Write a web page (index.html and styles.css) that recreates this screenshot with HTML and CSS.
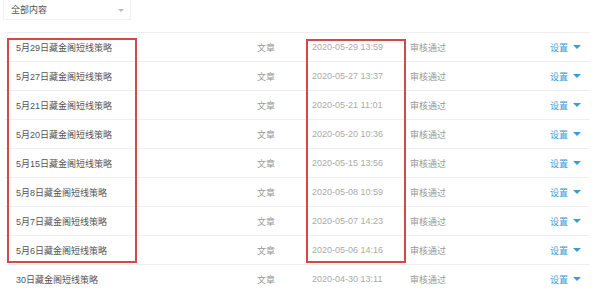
FILE: index.html
```html
<!DOCTYPE html>
<html lang="zh-CN">
<head>
<meta charset="utf-8">
<title>内容列表</title>
<link rel="stylesheet" href="styles.css">
</head>
<body>
<div class="page">
  <div class="filter">
    <span class="filter-label">全部内容</span>
    <span class="filter-caret"></span>
  </div>
  <div class="list">
    <div class="row"><span class="c-title">5月29日藏金阁短线策略</span><span class="c-type">文章</span><span class="c-date">2020-05-29 13:59</span><span class="c-status">审核通过</span><span class="c-act">设置<i class="caret"></i></span></div>
    <div class="row"><span class="c-title">5月27日藏金阁短线策略</span><span class="c-type">文章</span><span class="c-date">2020-05-27 13:37</span><span class="c-status">审核通过</span><span class="c-act">设置<i class="caret"></i></span></div>
    <div class="row"><span class="c-title">5月21日藏金阁短线策略</span><span class="c-type">文章</span><span class="c-date">2020-05-21 11:01</span><span class="c-status">审核通过</span><span class="c-act">设置<i class="caret"></i></span></div>
    <div class="row"><span class="c-title">5月20日藏金阁短线策略</span><span class="c-type">文章</span><span class="c-date">2020-05-20 10:36</span><span class="c-status">审核通过</span><span class="c-act">设置<i class="caret"></i></span></div>
    <div class="row"><span class="c-title">5月15日藏金阁短线策略</span><span class="c-type">文章</span><span class="c-date">2020-05-15 13:56</span><span class="c-status">审核通过</span><span class="c-act">设置<i class="caret"></i></span></div>
    <div class="row"><span class="c-title">5月8日藏金阁短线策略</span><span class="c-type">文章</span><span class="c-date">2020-05-08 10:59</span><span class="c-status">审核通过</span><span class="c-act">设置<i class="caret"></i></span></div>
    <div class="row"><span class="c-title">5月7日藏金阁短线策略</span><span class="c-type">文章</span><span class="c-date">2020-05-07 14:23</span><span class="c-status">审核通过</span><span class="c-act">设置<i class="caret"></i></span></div>
    <div class="row"><span class="c-title">5月6日藏金阁短线策略</span><span class="c-type">文章</span><span class="c-date">2020-05-06 14:16</span><span class="c-status">审核通过</span><span class="c-act">设置<i class="caret"></i></span></div>
    <div class="row"><span class="c-title">30日藏金阁短线策略</span><span class="c-type">文章</span><span class="c-date">2020-04-30 13:11</span><span class="c-status">审核通过</span><span class="c-act">设置<i class="caret"></i></span></div>
  </div>
  <div class="mark mark-titles"></div>
  <div class="mark mark-dates"></div>
</div>
</body>
</html>
```
FILE: styles.css
```css
html, body {
  margin: 0;
  padding: 0;
  background: #fff;
}
body {
  font-family: "Liberation Sans", "Noto Sans CJK SC", sans-serif;
  font-size: 9px;
  color: #666;
  overflow: hidden;
}
.page {
  position: relative;
  width: 594px;
  height: 290px;
  overflow: hidden;
}
.filter {
  box-sizing: border-box;
  margin: -1px 0 0 3px;
  width: 128px;
  height: 21px;
  border: 1px solid #f0f0f0;
  display: flex;
  align-items: center;
  justify-content: space-between;
  padding: 0 6px 0 7px;
}
.filter-label {
  color: #555;
  font-size: 9px;
}
.filter-caret {
  width: 0;
  height: 0;
  border-left: 3px solid transparent;
  border-right: 3px solid transparent;
  border-top: 3px solid #bbb;
  margin-top: 1px;
}
.list {
  margin: 12px 4px 0 5px;
  border-top: 1px solid #eeeeee;
}
.row {
  box-sizing: border-box;
  height: 29px;
  border-bottom: 1px solid #eeeeee;
  display: grid;
  grid-template-columns: 241px 55px 98px 140px 1fr;
  align-items: center;
  padding-left: 11px;
  white-space: nowrap;
}
.c-title { color: #555; }
.c-type { color: #999; }
.c-date { color: #aaa; }
.c-status { color: #999; }
.c-act {
  color: #3c9bd4;
  display: flex;
  align-items: center;
}
.caret {
  display: inline-block;
  width: 0;
  height: 0;
  margin-left: 5px;
  border-left: 4px solid transparent;
  border-right: 4px solid transparent;
  border-top: 4px solid #3c9bd4;
}
.mark {
  position: absolute;
  box-sizing: border-box;
  border: 2px solid #d5484a;
}
.mark-titles {
  left: 7px;
  top: 38px;
  width: 130px;
  height: 225px;
}
.mark-dates {
  left: 306px;
  top: 39px;
  width: 100px;
  height: 224px;
}
```
